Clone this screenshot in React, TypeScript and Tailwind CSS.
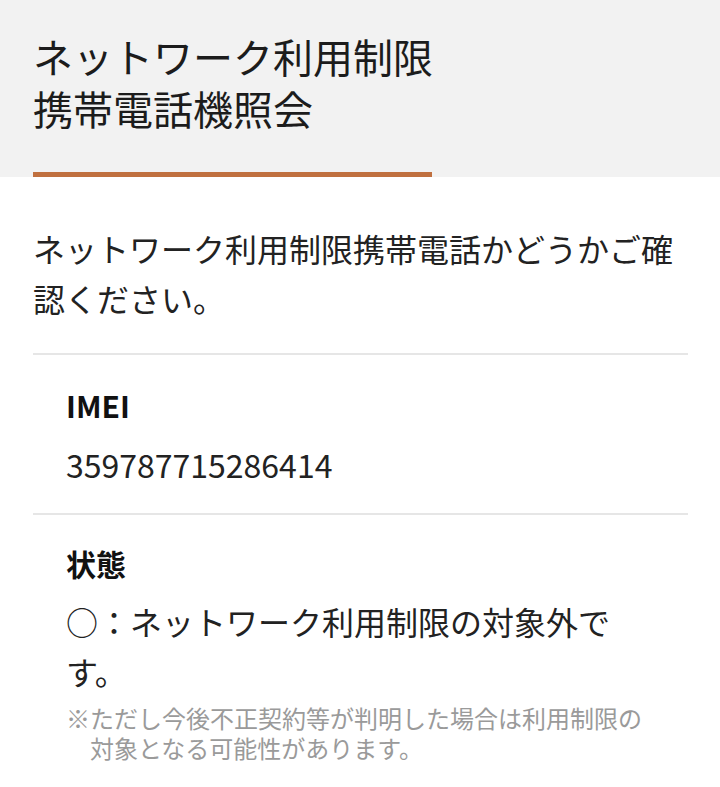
import React from "react";

export default function App() {
  return (
    <div className="min-h-screen w-full bg-white text-[#222] font-['Noto_Sans_CJK_JP',sans-serif]">
      <header className="bg-[#f2f2f2] pl-[33px] pt-[30px]">
        <h1 className="text-[40px] leading-[52px] font-normal text-[#1c1c1c]">
          ネットワーク利用制限
          <br />
          携帯電話機照会
        </h1>
        <div className="mt-[38px] h-[5px] w-[399px] bg-[#c0703f]" />
      </header>
      <main className="pl-[33px] pr-[32px]">
        <p className="mt-[46px] text-[32px] leading-[50px]">
          ネットワーク利用制限携帯電話かどうかご確認ください。
        </p>
        <div className="mt-[30px] h-[2px] bg-[#e6e6e6]" />
        <section className="px-[33px]">
          <h2 className="mt-[30px] text-[30px] leading-[40px] font-bold text-[#111]">IMEI</h2>
          <p className="mt-[19px] text-[32px] leading-[40px]">359787715286414</p>
        </section>
        <div className="mt-[29px] h-[2px] bg-[#e6e6e6]" />
        <section className="px-[33px]">
          <h2 className="mt-[28px] text-[30px] leading-[40px] font-bold text-[#111]">状態</h2>
          <p className="mt-[13px] text-[32px] leading-[50px]">
            ○：ネットワーク利用制限の対象外です。
          </p>
          <p className="mt-[7px] pl-[24px] -indent-[24px] text-[24px] leading-[30px] text-[#9a9a9a]">
            ※ただし今後不正契約等が判明した場合は利用制限の対象となる可能性があります。
          </p>
        </section>
      </main>
    </div>
  );
}
